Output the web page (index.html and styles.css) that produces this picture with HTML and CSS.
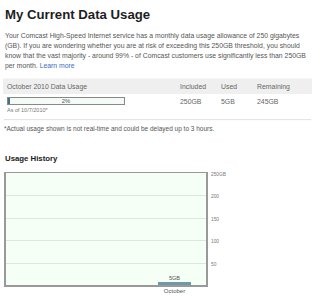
FILE: index.html
```html
<!DOCTYPE html>
<html>
<head>
  <meta name="viewport" content="width=device-width, initial-scale=1">
  <title>My Current Data Usage</title>
  <link rel="stylesheet" href="styles.css">
</head>
<body>
  <h1 class="page-title">My Current Data Usage</h1>
  <p class="intro">Your Comcast High-Speed Internet service has a monthly data usage allowance of 250 gigabytes (GB). If you are wondering whether you are at risk of exceeding this 250GB threshold, you should know that the vast majority - around 99% - of Comcast customers use significantly less than 250GB per month. <a href="#">Learn more</a></p>

  <table class="usage-table">
    <thead>
      <tr>
        <th class="col-period">October 2010 Data Usage</th>
        <th class="col-included">Included</th>
        <th class="col-used">Used</th>
        <th class="col-remaining">Remaining</th>
      </tr>
    </thead>
    <tbody>
      <tr>
        <td class="col-period">
          <div class="meter">
            <div class="meter-fill" style="width: 2%"></div>
            <span class="meter-label">2%</span>
          </div>
          <div class="as-of">As of 10/7/2010*</div>
        </td>
        <td>250GB</td>
        <td>5GB</td>
        <td>245GB</td>
      </tr>
    </tbody>
  </table>

  <p class="footnote">*Actual usage shown is not real-time and could be delayed up to 3 hours.</p>

  <h2 class="section-title">Usage History</h2>
  <div class="chart">
    <div class="chart-main">
      <div class="plot">
        <div class="grid-row"></div>
        <div class="grid-row"></div>
        <div class="grid-row"></div>
        <div class="grid-row"></div>
        <div class="grid-row"></div>
        <div class="bar" style="left: 152px; height: 3px;">
          <span class="bar-value">5GB</span>
        </div>
      </div>
      <div class="x-labels">
        <span class="x-label" style="left: 152px;">October</span>
      </div>
    </div>
    <div class="y-axis">
      <div class="y-label">250GB</div>
      <div class="y-label">200</div>
      <div class="y-label">150</div>
      <div class="y-label">100</div>
      <div class="y-label">50</div>
    </div>
  </div>
</body>
</html>
```

FILE: styles.css
```css
body {
  margin: 0;
  padding: 4px 8px 0 4px;
  font-family: "Liberation Sans", Arial, sans-serif;
  color: #555;
  background-color: #fff;
}

.page-title {
  margin: 2px 0 0 1px;
  font-size: 13.2px;
  line-height: 17px;
  color: #1e1e1e;
}

.intro {
  width: 307px;
  margin: 8px 0 0 1px;
  font-size: 6.85px;
  line-height: 10px;
}

.intro a {
  color: #3b6cc6;
  text-decoration: none;
}

.usage-table {
  width: 309px;
  margin: 7px 0 0 -1px;
  border-collapse: collapse;
  font-size: 6.9px;
  color: #666;
  box-shadow: 0 2px 1px -1px #e4e4e4;
}

.usage-table th {
  height: 15px;
  padding: 0;
  font-weight: normal;
  text-align: left;
  background-color: #efefef;
  border-top: 1px solid #f6f6f6;
}

.usage-table td {
  padding: 3px 0 6px 0;
  vertical-align: top;
}

.usage-table td:not(.col-period) {
  padding-top: 4px;
}

.usage-table .col-period {
  width: 173px;
  padding-left: 4px;
}

.col-included {
  width: 41px;
}

.col-used {
  width: 36px;
}

.meter {
  position: relative;
  width: 116px;
  height: 6px;
  border: 1px solid #888;
  background-color: #f4fbf7;
}

.meter-fill {
  height: 100%;
  background-color: #3f7488;
}

.meter-label {
  position: absolute;
  top: -1px;
  left: 0;
  right: 0;
  font-size: 5.8px;
  line-height: 8px;
  text-align: center;
  color: #555;
}

.as-of {
  margin-top: 2px;
  font-size: 5.5px;
  color: #777;
}

.footnote {
  margin: 6px 0 0 0;
  font-size: 6.5px;
  color: #555;
}

.section-title {
  margin: 22px 0 0 1px;
  font-size: 7.8px;
  color: #222;
}

.chart {
  display: flex;
  margin-top: 9px;
}

.chart-main {
  width: 204px;
}

.plot {
  position: relative;
  height: 112px;
  border: 1px solid #999;
  border-width: 1px 2px 2px 2px;
  background-color: #f6fff6;
}

.grid-row {
  height: 22.4px;
  box-sizing: border-box;
  border-top: 1px solid #dde8dd;
}

.grid-row:first-child {
  border-top: none;
}

.bar {
  position: absolute;
  bottom: 0;
  width: 33px;
  background-color: #6d9aa6;
}

.bar-value {
  position: absolute;
  bottom: 4px;
  left: 0;
  right: 0;
  font-size: 5.6px;
  text-align: center;
  color: #555;
}

.x-labels {
  position: relative;
  height: 10px;
}

.x-label {
  position: absolute;
  top: 1px;
  width: 37px;
  font-size: 6px;
  text-align: center;
  color: #555;
}

.y-axis {
  display: flex;
  flex-direction: column;
  padding-left: 3px;
}

.y-label {
  height: 22.4px;
  font-size: 4.8px;
  line-height: 6px;
  color: #777;
}
```
